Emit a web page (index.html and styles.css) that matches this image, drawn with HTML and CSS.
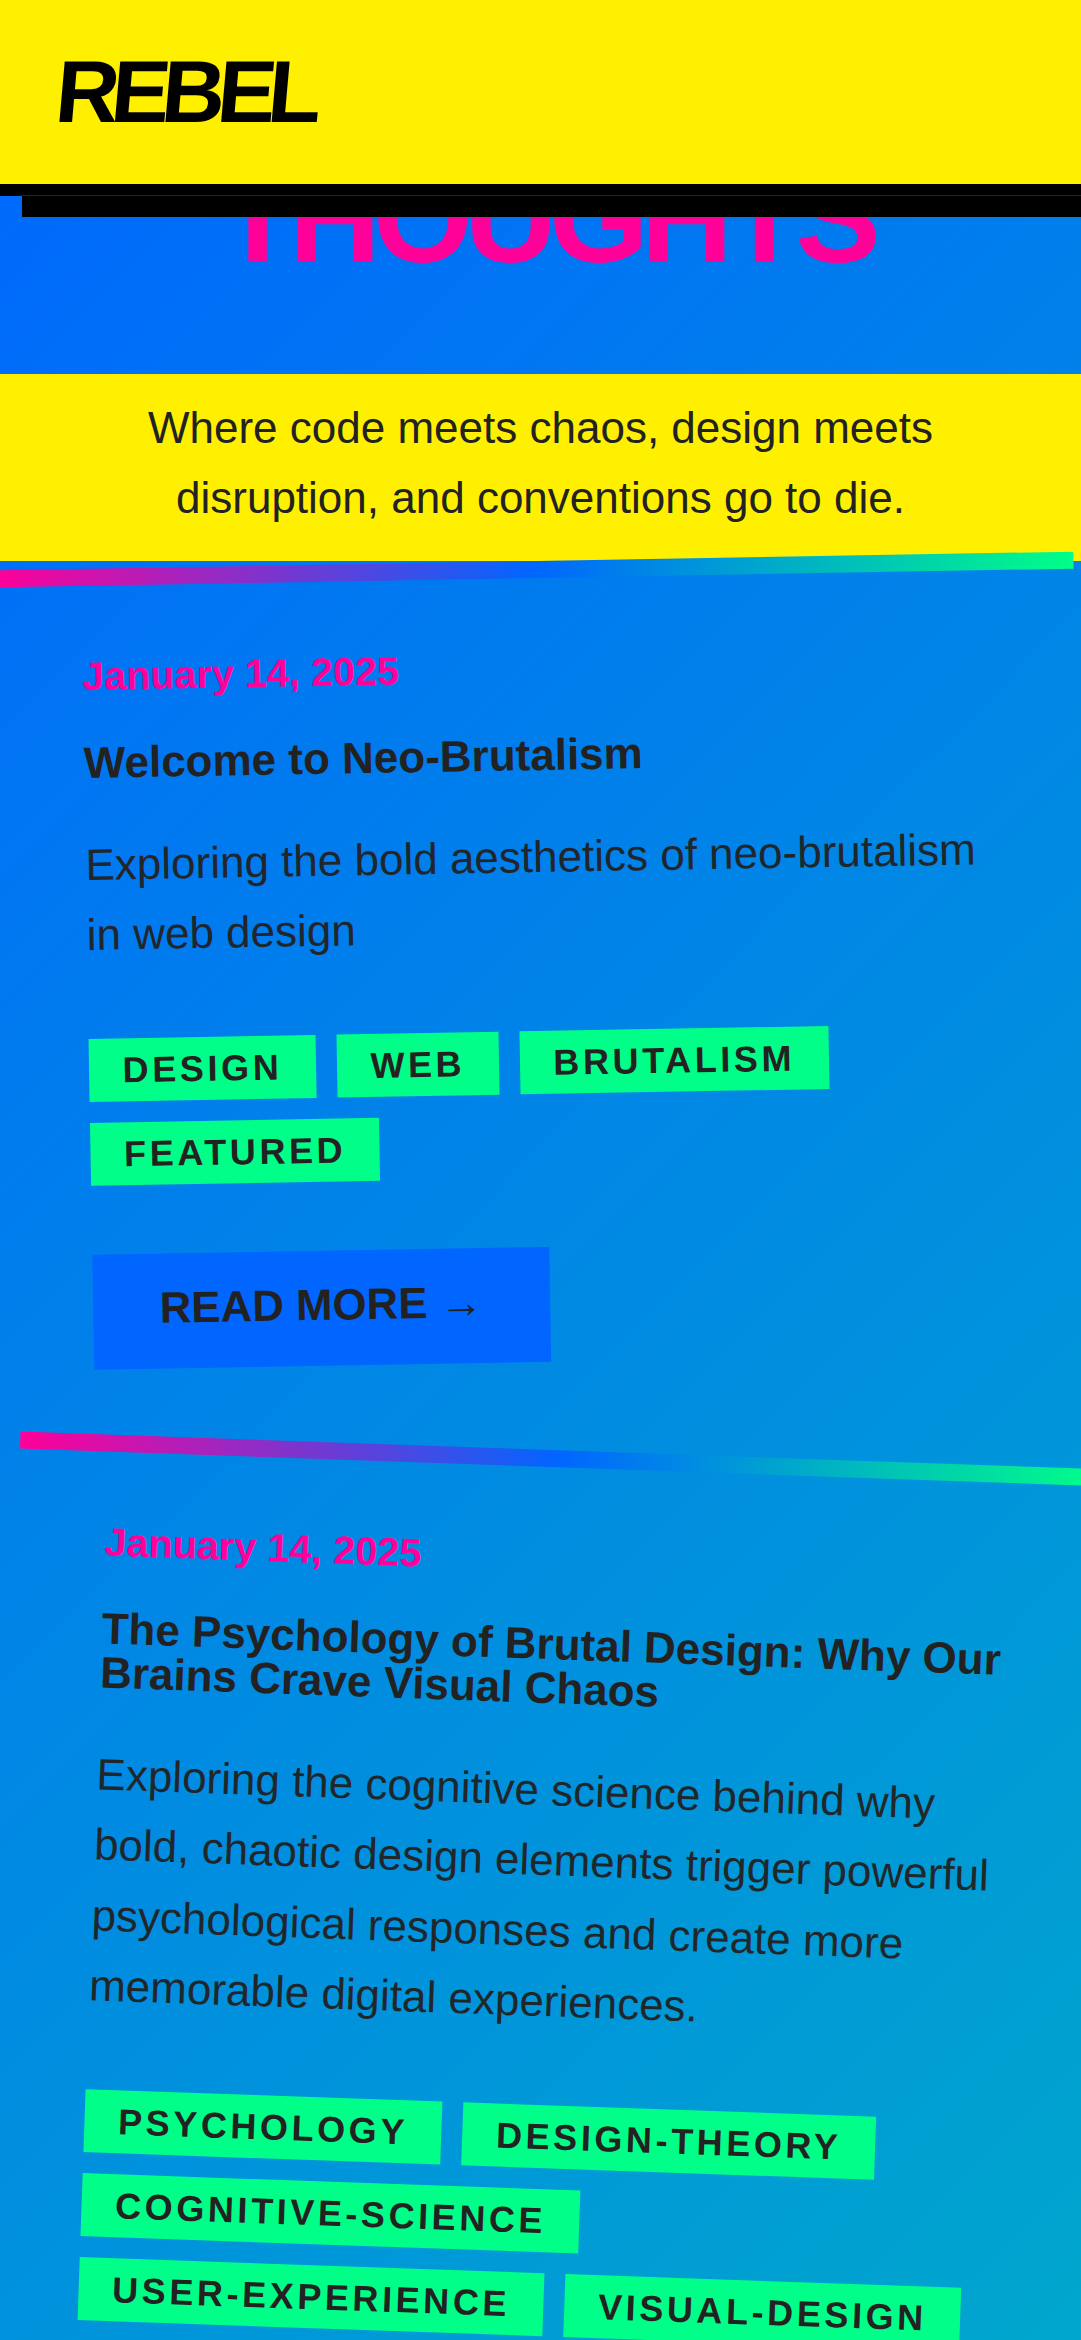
FILE: index.html
```html
<!DOCTYPE html>
<html lang="en">
<head>
  <meta charset="UTF-8">
  <title>Rebel</title>
  <meta name="viewport" content="width=device-width, initial-scale=1">
  <link rel="stylesheet" href="styles.css">
</head>
<body>
  <header class="site-header">
    <a class="logo" href="#">REBEL</a>
  </header>

  <section class="hero">
    <h1 class="hero-title">THOUGHTS</h1>
    <p class="tagline">Where code meets chaos, design meets disruption, and conventions go to die.</p>
  </section>

  <main>
    <article class="post post-left">
      <div class="post-date">January 14, 2025</div>
      <h2 class="post-title">Welcome to Neo-Brutalism</h2>
      <p class="post-excerpt">Exploring the bold aesthetics of neo-brutalism in web design</p>
      <div class="tags">
        <span class="tag">Design</span>
        <span class="tag">Web</span>
        <span class="tag">Brutalism</span>
        <span class="tag">Featured</span>
      </div>
      <a class="read-more" href="#">READ MORE <span class="arrow">→</span></a>
    </article>

    <article class="post post-right">
      <div class="post-date">January 14, 2025</div>
      <h2 class="post-title">The Psychology of Brutal Design: Why Our Brains Crave Visual Chaos</h2>
      <p class="post-excerpt">Exploring the cognitive science behind why bold, chaotic design elements trigger powerful psychological responses and create more memorable digital experiences.</p>
      <div class="tags">
        <span class="tag">Psychology</span>
        <span class="tag">Design-Theory</span>
        <span class="tag">Cognitive-Science</span>
        <span class="tag">User-Experience</span>
        <span class="tag">Visual-Design</span>
      </div>
      <a class="read-more" href="#">READ MORE <span class="arrow">→</span></a>
    </article>
  </main>
</body>
</html>
```

FILE: styles.css
```css
html {
  height: 2340px;
  overflow: hidden;
}

body {
  margin: 0;
  font-family: "Liberation Sans", Arial, sans-serif;
  color: #222;
  background: linear-gradient(135deg, #0066ff, #00ff88) no-repeat;
  background-size: 100% 7000px;
}

a {
  color: inherit;
  text-decoration: none;
}

.site-header {
  position: relative;
  z-index: 10;
  height: 184px;
  display: flex;
  align-items: center;
  padding: 0 56px;
  background: #fff000;
  border-bottom: 12px solid #000;
  box-shadow: 22px 21px 0 #000;
}

/* faint seam inside the black band */
.site-header::after {
  content: "";
  position: absolute;
  top: 195px;
  left: 22px;
  right: 0;
  height: 1px;
  background: #2e2a00;
}

.logo {
  display: block;
  font-size: 88px;
  font-weight: 700;
  letter-spacing: -8px;
  color: #000;
  transform: skew(-5deg);
}

.hero {
  text-align: center;
}

.hero-title {
  margin: -42px 0 0;
  padding-left: 10px;
  height: 220px;
  font-size: 128px;
  line-height: 1;
  letter-spacing: -8px;
  color: #ff0099;
}

.tagline {
  margin: 0;
  padding: 19px 90px 27px;
  font-size: 44px;
  line-height: 70.4px;
  background: #fff000;
}

.post {
  position: relative;
  padding: 76px 88px 88px;
}

.post::before {
  content: "";
  position: absolute;
  top: 0;
  left: 0;
  right: 0;
  height: 17px;
  background: linear-gradient(90deg, #ff0099, #0066ff, #00ff88);
}

.post-left {
  transform: rotate(-1deg);
}

.post-right {
  transform: rotate(2deg);
}

.post-date {
  font-size: 39.6px;
  line-height: 62px;
  font-weight: 700;
  color: #ff0099;
}

.post-title {
  margin: 34px 0 0;
  font-size: 44px;
  line-height: 44px;
  font-weight: 700;
}

.post-excerpt {
  margin: 45px 0 0;
  font-size: 44px;
  line-height: 70.4px;
  opacity: 0.95;
}

.tags {
  display: flex;
  flex-wrap: wrap;
  gap: 21px;
  margin-top: 68px;
}

.tag {
  padding: 0 33.6px;
  height: 63px;
  line-height: 63px;
  font-size: 36px;
  font-weight: 700;
  letter-spacing: 0.1em;
  text-transform: uppercase;
  background: #00ff88;
}

.read-more {
  display: inline-block;
  margin-top: 69px;
  padding: 0 66.5px;
  height: 115px;
  line-height: 107px;
  font-size: 43.8px;
  font-weight: 700;
  background: #0066ff;
}

.arrow {
  font-weight: 400;
}
```
